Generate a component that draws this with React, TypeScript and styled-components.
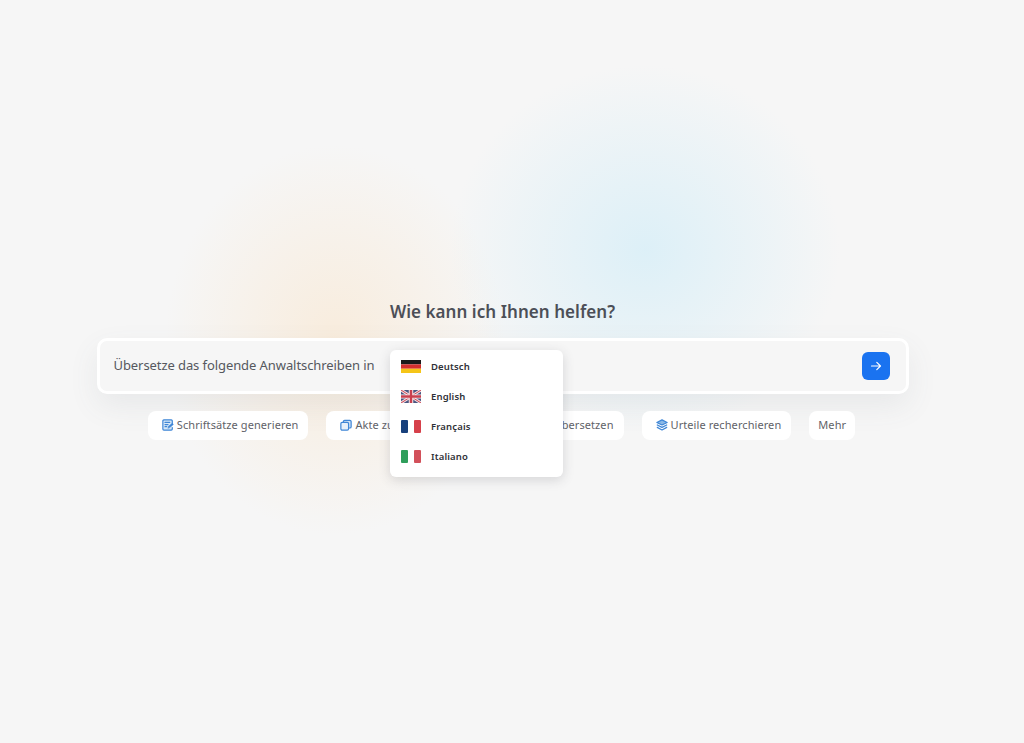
import React from "react";
import styled, { createGlobalStyle } from "styled-components";

const Global = createGlobalStyle`
  html, body { margin: 0; padding: 0; background: #f6f6f6; }
  body { font-family: "Noto Sans", "Open Sans", sans-serif; }
`;

const Page = styled.main`
  position: relative;
  height: 743px;
  overflow: hidden;
  box-sizing: border-box;
  padding: 300px 19px 0 0;
  display: flex;
  flex-direction: column;
  align-items: center;
  background: #f6f6f6;
`;

const Glow = styled.div<{ $x: number; $y: number; $w: number; $h: number; $c: string }>`
  position: absolute;
  left: ${(p) => p.$x}px;
  top: ${(p) => p.$y}px;
  width: ${(p) => p.$w}px;
  height: ${(p) => p.$h}px;
  border-radius: 50%;
  background: radial-gradient(closest-side, ${(p) => p.$c}, rgba(246, 246, 246, 0));
  pointer-events: none;
`;

const Title = styled.h1`
  position: relative;
  margin: 0 0 15px;
  height: 23px;
  line-height: 23px;
  font-size: 17px;
  font-weight: 600;
  color: #4c4f57;
  letter-spacing: 0.05px;
`;

const Composer = styled.div`
  position: relative;
  box-sizing: border-box;
  width: 812px;
  height: 56px;
  display: flex;
  align-items: center;
  justify-content: space-between;
  padding: 0 16px 0 14px;
  background: #f6f6f6;
  border: 3px solid #ffffff;
  border-radius: 10px;
  box-shadow: 0 12px 30px rgba(90, 100, 110, 0.09);
`;

const Prompt = styled.span`
  padding-bottom: 2px;
  font-size: 13px;
  letter-spacing: -0.08px;
  color: #55585e;
`;

const Send = styled.button`
  width: 28px;
  height: 28px;
  padding: 0;
  border: 0;
  border-radius: 6px;
  background: #1a73f0;
  display: flex;
  align-items: center;
  justify-content: center;
`;

const Chips = styled.div`
  position: relative;
  display: flex;
  gap: 18px;
  margin-top: 17px;
  margin-left: -2px;
`;

const Chip = styled.button<{ $plain?: boolean }>`
  box-sizing: border-box;
  height: 29px;
  padding: 0 ${(p) => (p.$plain ? 9 : 10)}px 2px ${(p) => (p.$plain ? 9 : 14)}px;
  display: flex;
  align-items: center;
  gap: 3px;
  border: 0;
  border-radius: 8px;
  background: #ffffff;
  font-family: inherit;
  font-size: 11px;
  letter-spacing: 0.08px;
  color: #5f6268;
  white-space: nowrap;
`;

const Menu = styled.ul`
  position: absolute;
  left: 390px;
  top: 350px;
  box-sizing: border-box;
  width: 173px;
  height: 127px;
  margin: 0;
  padding: 2px 0 0;
  list-style: none;
  background: #ffffff;
  border-radius: 6px;
  box-shadow: 0 3px 12px rgba(60, 60, 70, 0.18);
`;

const MenuItem = styled.li`
  height: 30px;
  padding: 0 0 1px 11px;
  box-sizing: border-box;
  display: flex;
  align-items: center;
  gap: 10px;
  font-size: 9.5px;
  font-weight: 600;
  letter-spacing: 0.15px;
  color: #2f3137;
`;

const ChipIcon = styled.svg`
  width: 12px;
  height: 12px;
  flex: none;
`;

const FlagSvg = styled.svg`
  width: 20px;
  height: 13px;
  flex: none;
`;

const Sketch = ({ children }: { children: React.ReactNode }) => (
  <ChipIcon viewBox="0 0 14 14" fill="none" stroke="#3f86d6" strokeWidth="1.4" strokeLinejoin="round" strokeLinecap="round">
    {children}
  </ChipIcon>
);

const PenDocIcon = () => (
  <Sketch>
    <path d="M12 6V2.2C12 1.5 11.5 1 10.8 1H2.2C1.5 1 1 1.5 1 2.2v9.6C1 12.5 1.5 13 2.2 13H10.8C11.5 13 12 12.5 12 11.8V10" fill="#d8e8f7" />
    <path d="M3.5 4H9M3.5 6.5H7M3.5 9H5.5" />
    <path d="M7 10.5L7.5 8.5L12 5L13.3 6.3L9 10Z" fill="#3f86d6" strokeWidth="0.6" />
  </Sketch>
);

const CopyIcon = () => (
  <Sketch>
    <rect x="4" y="1.5" width="9" height="9" rx="1.5" fill="#cfe2f5" />
    <rect x="1" y="4" width="9" height="9" rx="1.5" fill="#e6f0fa" />
  </Sketch>
);

const LangIcon = () => (
  <Sketch>
    <path d="M1.5 3H8M4.7 1.5V3M7 3C6.5 6 4 8.5 1.5 9.5M3 5.5C4 7.5 5.5 8.5 7 9" />
    <path d="M7.5 12.5L10 6.5L12.5 12.5M8.3 11H11.7" />
  </Sketch>
);

const StackIcon = () => (
  <Sketch>
    <path d="M7 1L13 4L7 7L1 4Z" fill="#8ab8e6" />
    <path d="M1.5 7L7 9.8L12.5 7" />
    <path d="M1.5 9.8L7 12.8L12.5 9.8" />
  </Sketch>
);

const FlagDe = () => (
  <FlagSvg viewBox="0 0 20 14" preserveAspectRatio="none">
    <rect width="20" height="4.7" fill="#1a1a1a" />
    <rect y="4.7" width="20" height="4.7" fill="#d32f2f" />
    <rect y="9.4" width="20" height="4.6" fill="#f5c518" />
  </FlagSvg>
);

const FlagUk = () => (
  <FlagSvg viewBox="0 0 20 14" preserveAspectRatio="none">
    <rect width="20" height="14" rx="1" fill="#4a5680" />
    <path d="M0 0L20 14M20 0L0 14" stroke="#f3dfe2" strokeWidth="3" />
    <path d="M0 0L20 14M20 0L0 14" stroke="#c9404e" strokeWidth="1" />
    <path d="M10 0V14M0 7H20" stroke="#f7eef0" strokeWidth="4.5" />
    <path d="M10 0V14M0 7H20" stroke="#c9404e" strokeWidth="2.5" />
  </FlagSvg>
);

const FlagFr = () => (
  <FlagSvg viewBox="0 0 20 14" preserveAspectRatio="none">
    <rect width="7" height="14" rx="1" fill="#17407c" />
    <rect x="13" width="7" height="14" rx="1" fill="#d6404a" />
  </FlagSvg>
);

const FlagIt = () => (
  <FlagSvg viewBox="0 0 20 14" preserveAspectRatio="none">
    <rect width="7" height="14" rx="1" fill="#2f9e5b" />
    <rect x="13" width="7" height="14" rx="1" fill="#d2505a" />
  </FlagSvg>
);

const languages = [
  { label: "Deutsch", flag: <FlagDe /> },
  { label: "English", flag: <FlagUk /> },
  { label: "Français", flag: <FlagFr /> },
  { label: "Italiano", flag: <FlagIt /> },
];

const actions = [
  { label: "Schriftsätze generieren", icon: <PenDocIcon /> },
  { label: "Akte zusammenfassen", icon: <CopyIcon /> },
  { label: "Text übersetzen", icon: <LangIcon /> },
  { label: "Urteile recherchieren", icon: <StackIcon /> },
];

export default function App() {
  return (
    <Page>
      <Global />
      <Glow $x={165} $y={145} $w={340} $h={390} $c="rgba(250, 228, 200, 0.55)" />
      <Glow $x={450} $y={65} $w={390} $h={370} $c="rgba(210, 237, 248, 0.7)" />
      <Title>Wie kann ich Ihnen helfen?</Title>
      <Composer>
        <Prompt>Übersetze das folgende Anwaltschreiben in</Prompt>
        <Send aria-label="Senden">
          <svg width="12" height="12" viewBox="0 0 12 12" fill="none" stroke="#fff" strokeWidth="1.2" strokeLinecap="round" strokeLinejoin="round">
            <path d="M1.5 6H10.5M6.8 2.3L10.5 6L6.8 9.7" />
          </svg>
        </Send>
      </Composer>
      <Chips>
        {actions.map((a) => (
          <Chip key={a.label}>
            {a.icon}
            {a.label}
          </Chip>
        ))}
        <Chip $plain>Mehr</Chip>
      </Chips>
      <Menu>
        {languages.map((l) => (
          <MenuItem key={l.label}>
            {l.flag}
            {l.label}
          </MenuItem>
        ))}
      </Menu>
    </Page>
  );
}
